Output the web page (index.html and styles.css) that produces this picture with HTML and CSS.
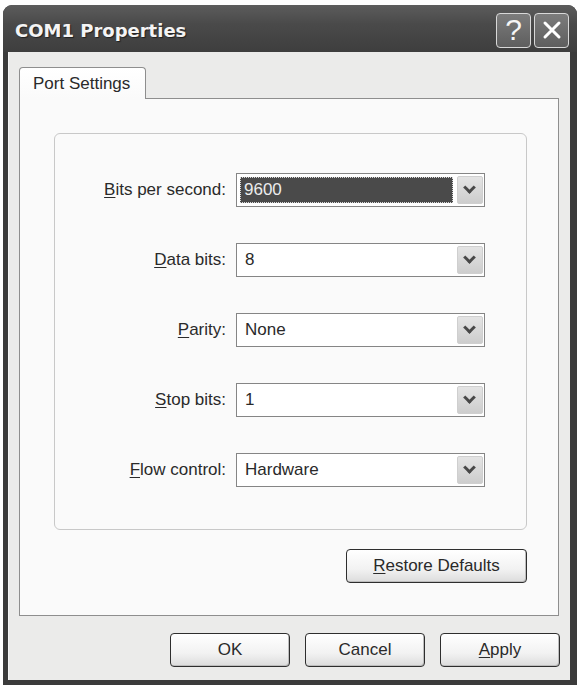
FILE: index.html
```html
<!DOCTYPE html>
<html lang="en">
<head>
    <meta charset="UTF-8">
    <meta name="viewport" content="width=device-width, initial-scale=1.0">
    <title>COM1 Properties</title>
    <link rel="stylesheet" href="styles.css">
</head>
<body>
    <div class="window">
        <header class="titlebar">
            <h1 class="title">COM1 Properties</h1>
            <div class="caption-buttons">
                <button class="cap-btn" aria-label="Help">?</button>
                <button class="cap-btn" aria-label="Close">
                    <svg width="22" height="22" viewBox="0 0 22 22">
                        <path d="M4 4 L18 18 M18 4 L4 18" stroke="#fff" stroke-width="3" stroke-linecap="round"/>
                    </svg>
                </button>
            </div>
        </header>

        <main class="dialog">
            <div class="tabs">
                <div class="tab">Port Settings</div>
                <div class="tab-fill"></div>
            </div>

            <section class="panel">
                <div class="group">
                    <label class="field-label"><u>B</u>its per second:</label>
                    <div class="combo">
                        <span class="combo-value selected">9600</span>
                        <span class="combo-arrow"></span>
                    </div>

                    <label class="field-label"><u>D</u>ata bits:</label>
                    <div class="combo">
                        <span class="combo-value">8</span>
                        <span class="combo-arrow"></span>
                    </div>

                    <label class="field-label"><u>P</u>arity:</label>
                    <div class="combo">
                        <span class="combo-value">None</span>
                        <span class="combo-arrow"></span>
                    </div>

                    <label class="field-label"><u>S</u>top bits:</label>
                    <div class="combo">
                        <span class="combo-value">1</span>
                        <span class="combo-arrow"></span>
                    </div>

                    <label class="field-label"><u>F</u>low control:</label>
                    <div class="combo">
                        <span class="combo-value">Hardware</span>
                        <span class="combo-arrow"></span>
                    </div>
                </div>

                <div class="panel-actions">
                    <button class="btn btn-wide"><u>R</u>estore Defaults</button>
                </div>
            </section>

            <footer class="dialog-actions">
                <button class="btn">OK</button>
                <button class="btn">Cancel</button>
                <button class="btn"><u>A</u>pply</button>
            </footer>
        </main>
    </div>
</body>
</html>
```

FILE: styles.css
```css
html {
  box-sizing: border-box;
}

*,
*:before,
*:after {
  box-sizing: inherit;
}

body {
  margin: 0;
  background-color: white;
  font-family: 'Liberation Sans', Arial, sans-serif;
  font-size: 17px;
  color: #2a2a2a;
}

u {
  text-underline-offset: 2px;
}

.window {
  margin: 5px 2px 0 3px;
  height: 680px;
  border-radius: 9px 9px 0 0;
  background-color: #3b3b3b;
  display: flex;
  flex-direction: column;
}

.titlebar {
  height: 47px;
  flex: none;
  display: flex;
  align-items: center;
  justify-content: space-between;
  padding: 3px 8px 0 12px;
  border-radius: 9px 9px 0 0;
  background: linear-gradient(#5c5c5c, #4a4a4a 40%, #3e3e3e);
}

.title {
  margin: 0;
  font-family: 'DejaVu Sans', Verdana, sans-serif;
  font-size: 18px;
  font-weight: bold;
  color: #f4f4f4;
  text-shadow: 1px 1px 1px #202020;
}

.caption-buttons {
  display: flex;
  gap: 3px;
}

.cap-btn {
  width: 35px;
  height: 35px;
  padding: 0;
  display: flex;
  align-items: center;
  justify-content: center;
  border: 1.5px solid #d8d8d8;
  border-radius: 4px;
  background: linear-gradient(#7c7c7c, #5e5e5e);
  color: #f6f6f6;
  font-family: 'Liberation Sans', Arial, sans-serif;
  font-size: 30px;
  line-height: 1;
}

.dialog {
  flex: 1;
  margin: 0 7px 5px 5px;
  background-color: #ebebea;
  border-left: 1px solid #f6f6f6;
  padding: 15px 11px 0 10px;
  display: flex;
  flex-direction: column;
}

.tabs {
  display: flex;
  height: 32px;
}

.tab {
  width: 127px;
  padding: 6px 0 0 13px;
  border: 1px solid #8e8e8e;
  border-bottom: none;
  border-radius: 4px 4px 0 0;
  background: linear-gradient(#ffffff, #fafafa);
  color: #2a2a2a;
}

.tab-fill {
  flex: 1;
  border-bottom: 1px solid #8e8e8e;
}

.panel {
  height: 517px;
  border: 1px solid #8e8e8e;
  border-top: none;
  background-color: #fafafa;
  padding: 34px 31px 0 34px;
}

.group {
  height: 397px;
  border: 1px solid #c8c8c8;
  border-radius: 6px;
  display: grid;
  grid-template-columns: 171px 249px;
  column-gap: 10px;
  row-gap: 36px;
  align-items: center;
  align-content: start;
  padding-top: 39px;
}

.field-label {
  text-align: right;
  white-space: nowrap;
}

.combo {
  height: 34px;
  border: 1px solid #858585;
  background-color: white;
  display: flex;
  align-items: center;
  padding: 2px 1px 2px 2px;
}

.combo-value {
  flex: 1;
  align-self: stretch;
  display: flex;
  align-items: center;
  padding-left: 6px;
  margin-right: 4px;
}

.combo-value.selected {
  margin: 1px 4px 1px 1px;
  padding-left: 4px;
  background-color: #4a4a4a;
  outline: 1px dotted #d8d8d8;
  outline-offset: -1px;
  color: #ececec;
}

.combo-arrow {
  width: 26px;
  align-self: stretch;
  border: 1px solid #cfcfcf;
  border-radius: 2px;
  background: linear-gradient(#e4e4e4, #cdcdcd);
  position: relative;
}

.combo-arrow:after {
  content: "";
  position: absolute;
  left: 7px;
  top: 6px;
  width: 9px;
  height: 9px;
  border-right: 3px solid #484848;
  border-bottom: 3px solid #484848;
  transform: rotate(45deg);
}

.panel-actions {
  display: flex;
  justify-content: flex-end;
  padding-top: 19px;
}

.btn {
  width: 120px;
  height: 34px;
  padding: 0;
  border: 1px solid #2e2e2e;
  border-radius: 4px;
  background: linear-gradient(#ffffff, #f2f2f2 60%, #dcdcdc);
  box-shadow: inset -1px -1px 0 #bdbdbd;
  font-family: inherit;
  font-size: 17px;
  color: #2a2a2a;
}

.btn-wide {
  width: 181px;
}

.dialog-actions {
  display: flex;
  justify-content: flex-end;
  gap: 15px;
  padding-top: 17px;
  margin-right: -1px;
}
```
